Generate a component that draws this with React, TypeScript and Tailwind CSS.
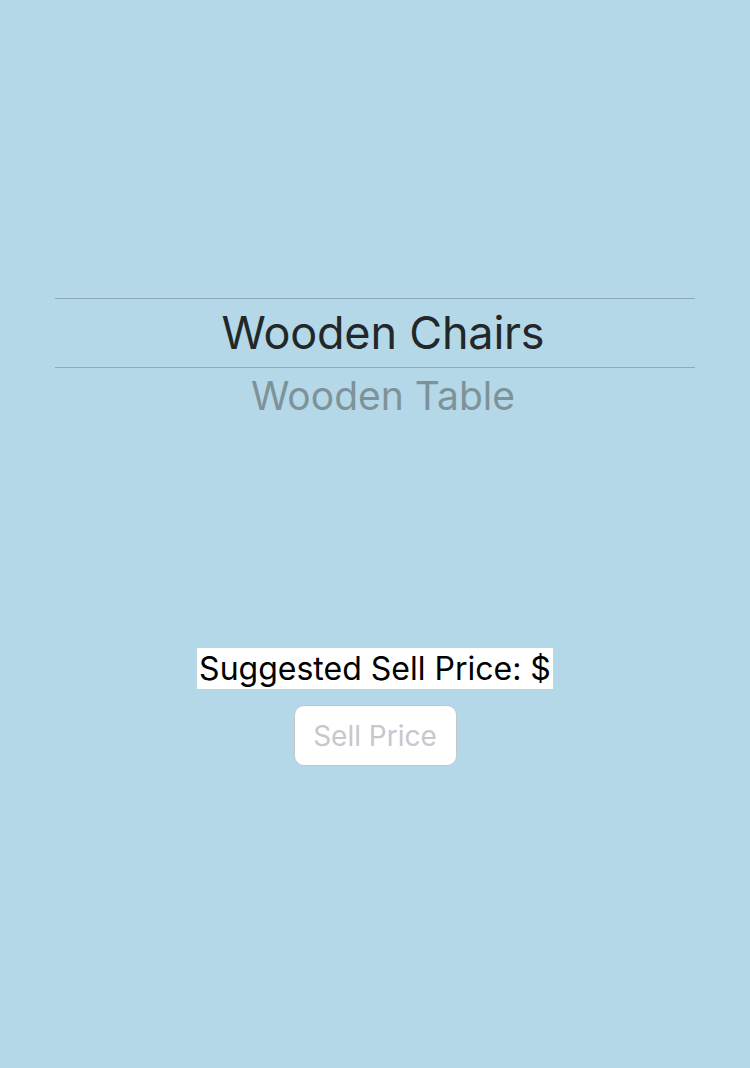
import React, { useState } from 'react';

const App: React.FC = () => {
  const items = ['Wooden Chairs', 'Wooden Table'];
  const [selected] = useState(0);
  const [price, setPrice] = useState('');

  return (
    <div className="w-[750px] h-[1068px] bg-[#b4d8e7] flex flex-col items-center font-['Inter',sans-serif]">
      <div className="mt-[298px] w-[640px] flex flex-col">
        <div className="h-[70px] pl-[16px] border-y border-[#92aab3] flex items-center justify-center text-[45px] text-[#222829] tracking-[-0.2px]">
          {items[selected]}
        </div>
        <div className="h-[58px] pl-[16px] flex items-center justify-center text-[39px] text-[#7e9299] -mt-[1px]">
          {items[1]}
        </div>
      </div>

      <div className="mt-[223px] bg-white h-[41px] px-[2px] flex items-center text-[32px] text-black leading-none">
        Suggested Sell Price: $
      </div>
      <input
        value={price}
        onChange={(e) => setPrice(e.target.value)}
        placeholder="Sell Price"
        className="mt-[16px] w-[163px] h-[61px] bg-white rounded-[10px] border border-[#c3c8cb] text-center text-[28px] text-black placeholder:text-[#c7c7cd] outline-none"
      />
    </div>
  );
};

export default App;
